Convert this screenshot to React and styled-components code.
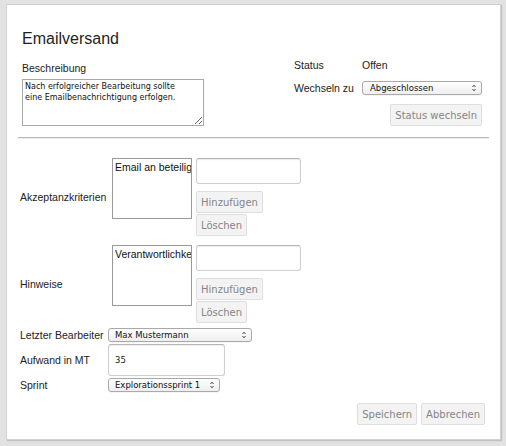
import React from "react";
import styled, { createGlobalStyle } from "styled-components";

const Global = createGlobalStyle`
  html, body { margin: 0; padding: 0; background: #e2e2e2; }
  * { box-sizing: border-box; }
`;

const Page = styled.div`
  height: 446px;
  padding: 4px 5px 6px 6px;
  background: #e2e2e2;
`;

const Panel = styled.div`
  height: 100%;
  background: #fff;
  border: 1px solid #d2d2d2;
  box-shadow: 1px 1px 1px rgba(0, 0, 0, 0.14);
  padding: 24px 11px 0 11px;
  display: flex;
  flex-direction: column;
  font-family: "Liberation Sans", Arial, sans-serif;
  color: #222;
`;

const Header = styled.div`
  display: flex;
  justify-content: space-between;
  align-items: flex-end;
  padding: 0 7px 0 4px;
`;

const Column = styled.div`
  display: flex;
  flex-direction: column;
  align-items: flex-start;
`;

const Title = styled.h1`
  margin: 0;
  font-size: 16px;
  line-height: 20px;
  font-weight: normal;
  color: #1e1e1e;
`;

const Label = styled.label`
  font-size: 10.5px;
  line-height: ${(p) => p.$lh || 13}px;
  color: #222;
  margin-top: ${(p) => p.$mt || 0}px;
`;

const TextArea = styled.textarea`
  margin-top: 4px;
  width: 182px;
  height: 47px;
  border: 1px solid #a8a8a8;
  padding: 1px 10px 1px 2px;
  font-family: "DejaVu Sans", sans-serif;
  font-size: 8px;
  line-height: 11px;
  color: #111;
  outline: none;
`;

const StatusGrid = styled.div`
  display: grid;
  grid-template-columns: 68px 120px;
  row-gap: 9px;
  align-items: center;
`;

const Value = styled.span`
  font-size: 10.5px;
  line-height: 14px;
  color: #222;
`;

const SelectWrap = styled.div`
  position: relative;
  display: inline-flex;
  width: ${(p) => p.$w}px;
  height: 14px;
`;

const Select = styled.select`
  appearance: none;
  -webkit-appearance: none;
  width: 100%;
  height: 14px;
  border: 1px solid #a9a9a9;
  border-radius: 3px;
  background: linear-gradient(#ffffff, #eeeeee);
  box-shadow: 0 1px 0 rgba(0, 0, 0, 0.04);
  padding: 0 14px 0 ${(p) => p.$pl || 6}px;
  font-family: "DejaVu Sans", sans-serif;
  font-size: 8.5px;
  line-height: 12px;
  color: #111;
  outline: none;
`;

const Arrow = styled.svg`
  position: absolute;
  right: 6px;
  top: 3px;
  pointer-events: none;
`;

const Button = styled.button`
  height: 22px;
  padding: 0 4px;
  border: 1px solid #dedede;
  border-radius: 2px;
  background: #f3f3f3;
  font-family: "DejaVu Sans", sans-serif;
  font-size: 10px;
  color: #858585;
  justify-self: ${(p) => p.$self || "auto"};
  grid-column: ${(p) => p.$span || "auto"};
  margin-bottom: ${(p) => p.$mb || 0}px;
  cursor: default;
`;

const Divider = styled.hr`
  margin: 11px 0 0 0;
  border: none;
  border-top: 1px solid #b9b9b9;
  border-bottom: 1px solid #ececec;
  height: 0;
`;

const Form = styled.div`
  margin-top: 19px;
  padding-left: 2px;
  display: flex;
  flex-direction: column;
`;

const FormRow = styled.div`
  display: grid;
  grid-template-columns: 88px auto;
  align-items: center;
  margin-top: ${(p) => p.$mt || 0}px;
`;

const ListGroup = styled.div`
  display: flex;
  align-items: flex-start;
  gap: 4px;
  padding-left: 4px;
`;

const ListBox = styled.div`
  width: 80px;
  height: 61px;
  border: 1px solid #9a9a9a;
  padding: 2px 2px 0 2px;
  overflow: hidden;
  white-space: nowrap;
  font-size: 10.5px;
  line-height: 13px;
  color: #111;
`;

const Stack = styled.div`
  display: flex;
  flex-direction: column;
  align-items: flex-start;
`;

const TextInput = styled.input`
  width: ${(p) => p.$w}px;
  height: ${(p) => p.$h}px;
  border: 1px solid #cfcfcf;
  border-top-color: #b5b5b5;
  border-radius: 3px;
  box-shadow: inset 0 1px 1px rgba(0, 0, 0, 0.08);
  padding: 0 6px;
  font-family: "DejaVu Sans", sans-serif;
  font-size: 8.5px;
  color: #222;
  margin-bottom: ${(p) => p.$mb || 0}px;
  outline: none;
`;

const Actions = styled.div`
  margin-top: 11px;
  display: flex;
  justify-content: flex-end;
  gap: 4px;
  padding-right: 4px;
`;

const UpDown = () => (
  <Arrow width="4" height="8" viewBox="0 0 4 8">
    <path d="M0.5 3 L2 1.2 L3.5 3" fill="none" stroke="#333" strokeWidth="0.9" />
    <path d="M0.5 5 L2 6.8 L3.5 5" fill="none" stroke="#333" strokeWidth="0.9" />
  </Arrow>
);

const Dropdown = ({ width, value, pl }) => (
  <SelectWrap $w={width}>
    <Select $pl={pl} defaultValue={value}>
      <option>{value}</option>
    </Select>
    <UpDown />
  </SelectWrap>
);

const ListRow = ({ label, item, mt }) => (
  <FormRow $mt={mt}>
    <Label>{label}</Label>
    <ListGroup>
      <ListBox>{item}</ListBox>
      <Stack>
        <TextInput $w={105} $h={26} $mb={7} />
        <Button $mb={1}>Hinzufügen</Button>
        <Button>Löschen</Button>
      </Stack>
    </ListGroup>
  </FormRow>
);

export default function App() {
  return (
    <>
      <Global />
      <Page>
        <Panel>
          <Header>
            <Column>
              <Title>Emailversand</Title>
              <Label $mt={13}>Beschreibung</Label>
              <TextArea
                defaultValue={"Nach erfolgreicher Bearbeitung sollte eine Emailbenachrichtigung erfolgen."}
              />
            </Column>
            <StatusGrid>
              <Label $lh={14}>Status</Label>
              <Value>Offen</Value>
              <Label $lh={14}>Wechseln zu</Label>
              <Dropdown width={120} value="Abgeschlossen" pl={7} />
              <Button $span="1 / -1" $self="end">Status wechseln</Button>
            </StatusGrid>
          </Header>
          <Divider />
          <Form>
            <ListRow label="Akzeptanzkriterien" item="Email an beteiligte Personen" />
            <ListRow label="Hinweise" item="Verantwortlichkeiten klären" mt={9} />
            <FormRow $mt={5}>
              <Label>Letzter Bearbeiter</Label>
              <Dropdown width={144} value="Max Mustermann" />
            </FormRow>
            <FormRow $mt={2}>
              <Label>Aufwand in MT</Label>
              <TextInput $w={117} $h={32} defaultValue="35" />
            </FormRow>
            <FormRow $mt={2}>
              <Label>Sprint</Label>
              <Dropdown width={112} value="Explorationssprint 1" />
            </FormRow>
          </Form>
          <Actions>
            <Button>Speichern</Button>
            <Button>Abbrechen</Button>
          </Actions>
        </Panel>
      </Page>
    </>
  );
}
